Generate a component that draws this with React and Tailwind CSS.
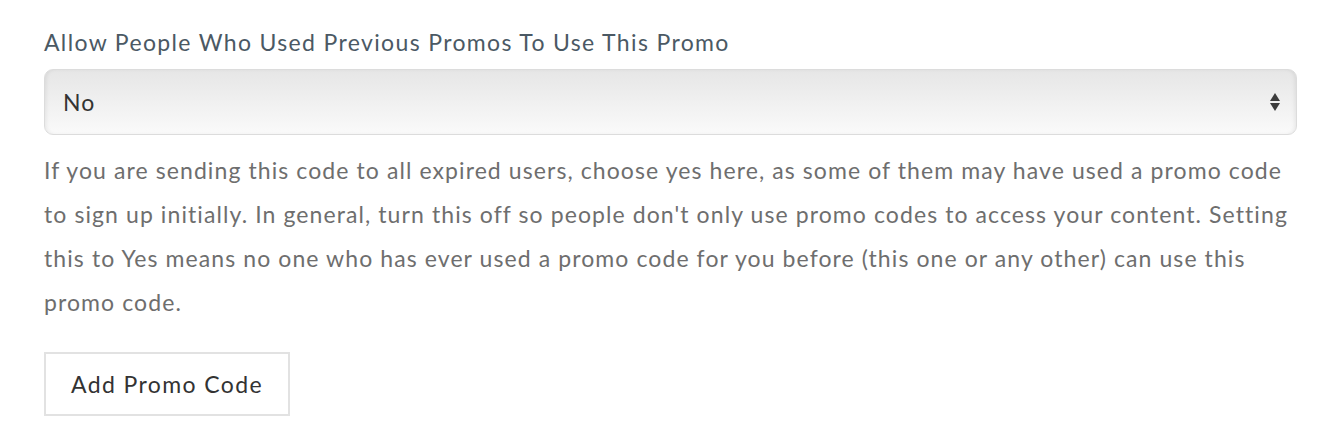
import React from "react";

const PromoSettings = () => {
  return (
    <div
      className="bg-white w-[1324px] h-[446px] pl-[44px] pr-[27px] pt-[28px]"
      style={{ fontFamily: "Lato, 'Open Sans', sans-serif" }}
    >
      <label className="block text-[23px] leading-[28px] tracking-[1.35px] text-[#4b5964]">
        Allow People Who Used Previous Promos To Use This Promo
      </label>
      <div className="relative mt-[13px] h-[66px] rounded-[9px] border border-[#dcdcdc] bg-gradient-to-b from-[#e6e6e6] via-[#f0f0f0] to-[#fafafa] shadow-[inset_3px_0_4px_-2px_rgba(0,0,0,0.08),inset_-3px_0_4px_-2px_rgba(0,0,0,0.08)] flex items-center pl-[18px]">
        <span className="text-[23px] tracking-[1.1px] text-[#333333]">No</span>
        <svg
          className="absolute right-[16px] top-1/2 -translate-y-1/2"
          width="10"
          height="22"
          viewBox="0 0 10 22"
        >
          <path d="M5 2 L10 10 L0 10 Z" fill="#3c3c3c" />
          <path d="M0 12 L10 12 L5 20 Z" fill="#3c3c3c" />
        </svg>
      </div>
      <p className="mt-[13px] text-[23px] leading-[44px] tracking-[1.09px] text-[#6e6e6e] whitespace-nowrap">
        If you are sending this code to all expired users, choose yes here, as
        some of them may have used a promo code
        <br />
        to sign up initially. In general, turn this off so people don't only
        use promo codes to access your content. Setting
        <br />
        this to Yes means no one who has ever used a promo code for you before
        (this one or any other) can use this
        <br />
        promo code.
      </p>
      <button className="mt-[28px] w-[246px] h-[64px] border-2 border-[#e2e2e2] bg-white text-[23px] tracking-[1.4px] text-[#333333]">
        Add Promo Code
      </button>
    </div>
  );
};

export default function App() {
  return <PromoSettings />;
}
